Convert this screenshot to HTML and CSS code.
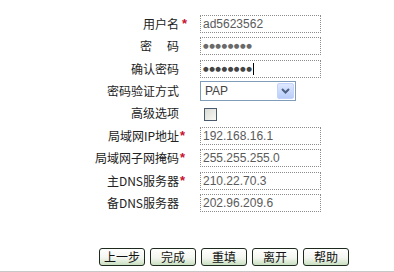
FILE: index.html
```html
<!DOCTYPE html>
<html>
<head>
<meta charset="utf-8">
<link rel="stylesheet" href="styles.css">
</head>
<body>
<div class="page">
  <div class="form">
    <div class="lbl">用户名 <span class="star first">*</span></div>
    <div class="fld"><input class="txt" type="text" value="ad5623562"></div>

    <div class="lbl">密<span class="gap"></span>码<span class="star"></span></div>
    <div class="fld"><div class="txt pw"><span class="dots light">●●●●●●●●</span></div></div>

    <div class="lbl">确认密码<span class="star"></span></div>
    <div class="fld"><div class="txt pw"><span class="dots">●●●●●●●●</span><span class="caret"></span></div></div>

    <div class="lbl">密码验证方式<span class="star"></span></div>
    <div class="fld">
      <div class="sel"><span class="sel-val">PAP</span><span class="sel-btn"><svg width="9" height="6" viewBox="0 0 9 6"><path d="M1 1 L4.5 4.5 L8 1" fill="none" stroke="#4d6185" stroke-width="2"/></svg></span></div>
    </div>

    <div class="lbl">高级选项<span class="star"></span></div>
    <div class="fld"><span class="chk"></span></div>

    <div class="lbl">局域网IP地址<span class="star">*</span></div>
    <div class="fld"><input class="txt" type="text" value="192.168.16.1"></div>

    <div class="lbl">局域网子网掩码<span class="star">*</span></div>
    <div class="fld"><input class="txt" type="text" value="255.255.255.0"></div>

    <div class="lbl">主DNS服务器<span class="star">*</span></div>
    <div class="fld"><input class="txt" type="text" value="210.22.70.3"></div>

    <div class="lbl">备DNS服务器<span class="star"></span></div>
    <div class="fld"><input class="txt" type="text" value="202.96.209.6"></div>
  </div>

  <div class="btnbar">
    <button class="btn">上一步</button>
    <button class="btn">完成</button>
    <button class="btn">重填</button>
    <button class="btn">离开</button>
    <button class="btn">帮助</button>
  </div>
</div>
</body>
</html>
```
FILE: styles.css
```css
html, body {
  margin: 0;
  padding: 0;
  background: #fff;
}
body {
  width: 394px;
  height: 272px;
  overflow: hidden;
  font-family: "Noto Sans CJK SC", "Liberation Sans", sans-serif;
  font-size: 12px;
  color: #222;
}
.page {
  height: 271px;
  border-bottom: 1px solid #c8c8c8;
  display: flex;
  flex-direction: column;
}
.form {
  display: grid;
  grid-template-columns: 190px 131px;
  grid-auto-rows: 22.375px;
  padding-top: 12.8px;
}
.lbl {
  display: flex;
  align-items: center;
  justify-content: flex-end;
  line-height: 14px;
  white-space: nowrap;
}
.gap {
  display: inline-block;
  width: 15px;
}
.star {
  display: inline-block;
  width: 11px;
  padding-left: 1px;
  box-sizing: border-box;
  color: #c8102e;
  font-weight: bold;
  font-family: "Liberation Sans", sans-serif;
  font-size: 13px;
}
.star.first {
  padding-left: 3px;
}
.fld {
  display: flex;
  align-items: center;
  padding-left: 10px;
}
.txt {
  box-sizing: border-box;
  width: 121px;
  height: 18px;
  border: 1px dotted #8c8c8c;
  padding: 0 2px;
  margin: 0;
  font-family: "Liberation Sans", Arial, sans-serif;
  font-size: 12px;
  color: #5a5a5a;
  background: #fff;
  outline: none;
}
.pw {
  display: flex;
  align-items: center;
}
.dots {
  font-family: "DejaVu Sans", sans-serif;
  font-size: 6.5px;
  letter-spacing: 0.5px;
  color: #444;
}
.dots.light {
  color: #6a6a6a;
}
.caret {
  display: inline-block;
  width: 1px;
  height: 12px;
  background: #000;
  margin-left: 1px;
}
.sel {
  box-sizing: border-box;
  width: 96px;
  height: 20px;
  border: 1px solid #7f9db9;
  display: flex;
  align-items: stretch;
  background: #fff;
}
.sel-val {
  flex: 1;
  display: flex;
  align-items: center;
  padding-left: 4px;
  font-family: "Liberation Sans", Arial, sans-serif;
  font-size: 12px;
  color: #444;
}
.sel-btn {
  width: 17px;
  margin: 1px;
  border: 1px solid #c3d3fd;
  border-radius: 2px;
  background: linear-gradient(#dfe9ff, #b8cdf9);
  display: flex;
  align-items: center;
  justify-content: center;
  box-sizing: border-box;
}
.chk {
  display: inline-block;
  box-sizing: border-box;
  width: 13px;
  height: 13px;
  margin-left: 4px;
  margin-top: 2px;
  border: 1px solid #4a5a6e;
  background: linear-gradient(135deg, #dcdcd6, #f8f8f4);
}
.btnbar {
  margin-top: auto;
  margin-bottom: 5px;
  display: flex;
  gap: 5px;
  padding-left: 99px;
}
.btn {
  box-sizing: border-box;
  width: 46px;
  height: 18px;
  padding: 0;
  margin: 0;
  border: 1px solid #1e2a1e;
  border-radius: 3px;
  background: linear-gradient(#ffffff 0%, #f4f6f0 55%, #c9e0c0 100%);
  font-family: "Noto Sans CJK SC", sans-serif;
  font-size: 12px;
  line-height: 14px;
  color: #111;
}
```
